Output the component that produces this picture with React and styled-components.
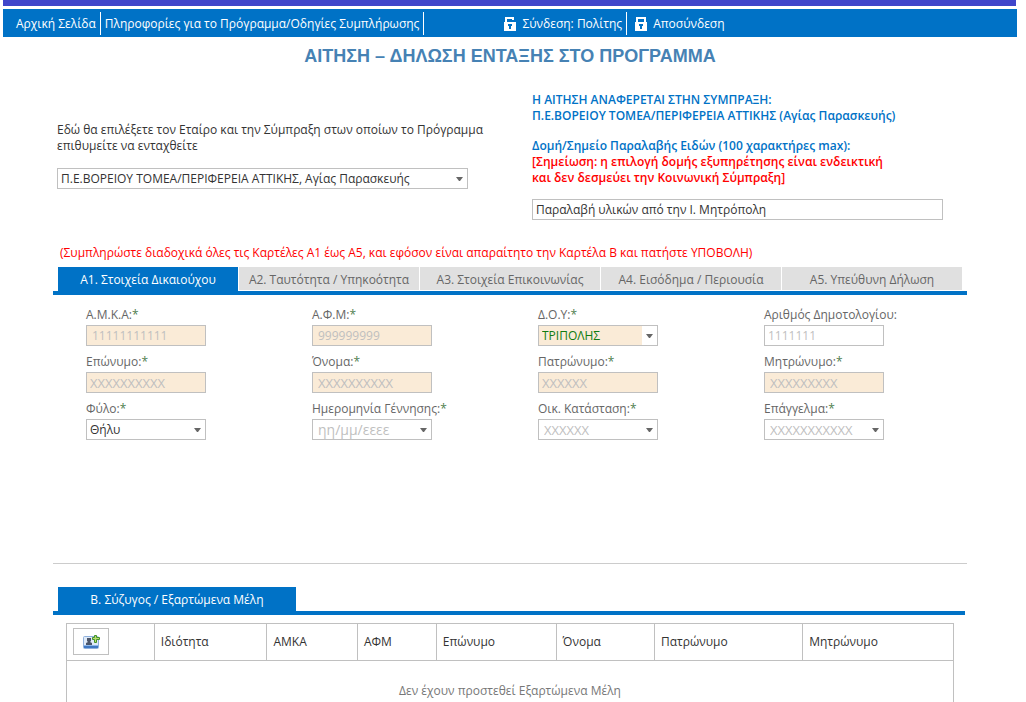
import React from "react";
import styled, { createGlobalStyle, css } from "styled-components";

const BLUE = "#0072c6";
const LINE = "#c0c0c0";

const GlobalStyle = createGlobalStyle`
  *, *::before, *::after { box-sizing: border-box; }
  body {
    margin: 0;
    background: #fff;
    color: #333;
    font: 12px/16px "Open Sans", "Noto Sans", sans-serif;
  }
`;

const Page = styled.div`
  margin: 0 9px 0 3px;
`;

const TopStripe = styled.div`
  height: 6px;
  margin: 0 1px 3px 0;
  background: #4046cb;
`;

const NavBar = styled.nav`
  display: flex;
  gap: 76px;
  height: 28px;
  padding: 3px 9px 2px;
  background: ${BLUE};
`;

const NavGroup = styled.div`
  display: flex;
`;

const NavLink = styled.a`
  display: flex;
  align-items: center;
  gap: 6px;
  padding: 0 ${(p) => (p.$last ? 8 : 4)}px;
  color: #fff;
  text-decoration: none;
  white-space: nowrap;
  border-right: 1px solid ${(p) => (p.$last ? "transparent" : "#fff")};
`;

const Title = styled.h1`
  margin: 7px 0 0;
  color: #4682b4;
  font: bold 18px/24px "Liberation Sans", Arial, sans-serif;
  text-align: center;
`;

const Content = styled.main`
  padding: 0 50px;
`;

const Intro = styled.section`
  display: grid;
  grid-template-columns: 1fr 1fr;
  gap: 64px;
  margin-top: 24px;
  padding: 0 24px 0 4px;
`;

const PartnerPicker = styled.div`
  min-width: 0;
  padding-top: 30px;
`;

const PickerLabel = styled.label`
  display: block;
  margin-bottom: 14px;
  white-space: nowrap;
`;

const Notice = styled.p`
  margin: 0 0 14px;
  color: ${BLUE};
  font-weight: 600;
`;

const PickupLabel = styled.label`
  display: block;
  margin-bottom: 13px;
  color: ${BLUE};
  font-weight: 600;
`;

const Warning = styled.span`
  color: #f00;
`;

const Hint = styled.p`
  margin: 25px 0 6px;
  padding-left: 7px;
  color: #f00;
`;

const controlStyle = css`
  width: 100%;
  height: 21px;
  margin: 0;
  padding: 0 ${(p) => p.$inset || 3}px;
  border: 1px solid ${LINE};
  border-radius: 0;
  outline: none;
  background: ${(p) => (p.$filled ? "#faebd7" : "#fff")};
  color: ${(p) => p.$color || "#333"};
  font: inherit;
  font-size: ${(p) => p.$size || 12}px;
`;

const TextInput = styled.input`
  ${controlStyle}
`;

const Select = styled.select`
  ${controlStyle}
  appearance: none;
`;

const DropBox = styled.div`
  display: grid;
  > * { grid-area: 1 / 1; }
`;

const DropMark = styled.span`
  display: flex;
  align-items: center;
  justify-content: center;
  justify-self: end;
  width: 15px;
  margin: 1px;
  background: #fff;
  pointer-events: none;
`;

const TabList = styled.div`
  display: flex;
  gap: 1px;
  padding: 0 5px;
  border-bottom: 4px solid ${BLUE};
`;

const Tab = styled.button`
  flex: 1;
  height: 23px;
  margin: 0 0 1px;
  padding: 2px 0 0;
  border: 0;
  background: #e0e0e0;
  color: #666;
  font: inherit;
  white-space: nowrap;

  &[aria-selected="true"] {
    height: 24px;
    margin: 0;
    background: ${BLUE};
    color: #fff;
    font-weight: 500;
  }
`;

const SpouseTab = styled(Tab)`
  flex: 0 0 238px;
`;

const FieldGrid = styled.form`
  display: grid;
  grid-template-columns: repeat(4, 1fr);
  gap: 8px 23px;
  padding: 12px 0 123px 33px;
  border-bottom: 1px solid #ccc;
`;

const Field = styled.div`
  width: 120px;
  color: #666;
`;

const FieldLabel = styled.label`
  display: block;
  margin-bottom: 2px;
  white-space: nowrap;
`;

const Star = styled.span`
  color: #508050;
`;

const Dependants = styled.section`
  margin: 23px 2px 0 0;
`;

const TableFrame = styled.div`
  margin: 8px 11px 0 13px;
`;

const Table = styled.table`
  width: 100%;
  border-collapse: collapse;
  table-layout: fixed;
`;

const HeadCell = styled.th`
  width: ${(p) => p.$share}%;
  height: 37px;
  padding: 0 6px;
  border: 1px solid ${LINE};
  font-weight: normal;
  text-align: left;
`;

const EmptyCell = styled.td`
  height: 41px;
  padding: 22px 0 2px;
  border: solid ${LINE};
  border-width: 0 1px;
  color: #777;
  text-align: center;
`;

const AddButton = styled.button`
  display: flex;
  align-items: center;
  justify-content: center;
  width: 36px;
  height: 27px;
  margin-bottom: 1px;
  padding: 0;
  border: 1px solid ${LINE};
  background: #fff;
`;

function LockIcon({ open }) {
  return (
    <svg width="12" height="14" viewBox="0 0 12 14" aria-hidden="true">
      <path fill="#fff" d={open ? "M1 0h9v3H8V2H3v3h9v9H0V5h1z" : "M1 0h10v5h1v9H0V5h1zM3 2v3h6V2z"} fillRule="evenodd" />
      <path fill={BLUE} d="M4 7h4v2H7v3H5V9H4z" />
    </svg>
  );
}

function Arrow() {
  return (
    <DropMark>
      <svg width="7" height="4" viewBox="0 0 7 4" aria-hidden="true">
        <path fill="#666" d="M0 0h7L4 4H3z" />
      </svg>
    </DropMark>
  );
}

function AddCardIcon() {
  return (
    <svg width="17" height="14" viewBox="0 0 17 14" aria-hidden="true">
      <rect x="0.5" y="1.5" width="15" height="12" rx="1" fill="#dfeaf8" stroke="#8fb0dc" />
      <path fill="#3f78c3" d="M1 11h14v2H1z" />
      <path fill="#8fb8ea" d="M1 10h14v1H1z" />
      <path fill="#4b566b" d="M4 3h4v3l-1 1 2 1v2H3V8l2-1-1-1z" />
      <path fill="#b9dd6c" stroke="#43912a" d="M11.5 0.5h2v2h3v2h-3v3h-2v-3h-2v-2h2z" />
    </svg>
  );
}

const TABS = [
  "A1. Στοιχεία Δικαιούχου",
  "A2. Ταυτότητα / Υπηκοότητα",
  "A3. Στοιχεία Επικοινωνίας",
  "A4. Εισόδημα / Περιουσία",
  "A5. Υπεύθυνη Δήλωση",
];

const GREY = "#bfbfbf";

const FIELDS = [
  { id: "amka", label: "Α.Μ.Κ.Α:", required: true, value: "11111111111", filled: true, inset: 5 },
  { id: "afm", label: "Α.Φ.Μ:", required: true, value: "999999999", filled: true, inset: 5 },
  { id: "doy", label: "Δ.Ο.Υ:", required: true, value: "ΤΡΙΠΟΛΗΣ", filled: true, color: "#107c10", kind: "select" },
  { id: "registry", label: "Αριθμός Δημοτολογίου:", value: "1111111" },
  { id: "surname", label: "Επώνυμο:", required: true, value: "XXXXXXXXXX", filled: true, size: 13 },
  { id: "name", label: "Όνομα:", required: true, value: "XXXXXXXXXX", filled: true, inset: 5, size: 13 },
  { id: "father", label: "Πατρώνυμο:", required: true, value: "XXXXXX", filled: true, size: 13 },
  { id: "mother", label: "Μητρώνυμο:", required: true, value: "XXXXXXXXX", filled: true, inset: 5, size: 13 },
  { id: "gender", label: "Φύλο:", required: true, value: "Θήλυ", kind: "select", color: "#333" },
  { id: "birth", label: "Ημερομηνία Γέννησης:", required: true, value: "ηη/μμ/εεεε", kind: "date", inset: 5, size: 14 },
  { id: "marital", label: "Οικ. Κατάσταση:", required: true, value: "XXXXXX", kind: "select", inset: 5, size: 13 },
  { id: "job", label: "Επάγγελμα:", required: true, value: "XXXXXXXXXXX", kind: "select", inset: 5, size: 13 },
];

const COLUMNS = [
  ["Ιδιότητα", 12.7],
  ["ΑΜΚΑ", 10.2],
  ["ΑΦΜ", 8.9],
  ["Επώνυμο", 13.5],
  ["Όνομα", 11.1],
  ["Πατρώνυμο", 16.7],
  ["Μητρώνυμο", 17],
];

function FormField({ id, label, required, value, filled, inset, size, kind, color = GREY }) {
  const look = { id, $filled: filled, $inset: inset, $size: size, $color: color };
  return (
    <Field>
      <FieldLabel htmlFor={id}>
        {label}
        {required && <Star>*</Star>}
      </FieldLabel>
      {kind === "select" && (
        <DropBox>
          <Select {...look}>
            <option>{value}</option>
          </Select>
          <Arrow />
        </DropBox>
      )}
      {kind === "date" && (
        <DropBox>
          <TextInput {...look} defaultValue={value} />
          <Arrow />
        </DropBox>
      )}
      {!kind && <TextInput {...look} defaultValue={value} />}
    </Field>
  );
}

export default function App() {
  return (
    <>
      <GlobalStyle />
      <Page>
        <TopStripe />
        <NavBar>
          <NavGroup>
            <NavLink href="#home">Αρχική Σελίδα</NavLink>
            <NavLink href="#info">Πληροφορίες για το Πρόγραμμα/Οδηγίες Συμπλήρωσης</NavLink>
          </NavGroup>
          <NavGroup>
            <NavLink href="#login">
              <LockIcon open />
              Σύνδεση: Πολίτης
            </NavLink>
            <NavLink href="#logout" $last>
              <LockIcon />
              Αποσύνδεση
            </NavLink>
          </NavGroup>
        </NavBar>
        <Title>ΑΙΤΗΣΗ – ΔΗΛΩΣΗ ΕΝΤΑΞΗΣ ΣΤΟ ΠΡΟΓΡΑΜΜΑ</Title>
        <Content>
          <Intro>
            <PartnerPicker>
              <PickerLabel htmlFor="partner">
                Εδώ θα επιλέξετε τον Εταίρο και την Σύμπραξη στων οποίων το Πρόγραμμα
                <br />
                επιθυμείτε να ενταχθείτε
              </PickerLabel>
              <DropBox>
                <Select id="partner">
                  <option>Π.Ε.ΒΟΡΕΙΟΥ ΤΟΜΕΑ/ΠΕΡΙΦΕΡΕΙΑ ΑΤΤΙΚΗΣ, Αγίας Παρασκευής</option>
                </Select>
                <Arrow />
              </DropBox>
            </PartnerPicker>
            <div>
              <Notice>
                Η ΑΙΤΗΣΗ ΑΝΑΦΕΡΕΤΑΙ ΣΤΗΝ ΣΥΜΠΡΑΞΗ:
                <br />
                Π.Ε.ΒΟΡΕΙΟΥ ΤΟΜΕΑ/ΠΕΡΙΦΕΡΕΙΑ ΑΤΤΙΚΗΣ (Αγίας Παρασκευής)
              </Notice>
              <PickupLabel htmlFor="pickup">
                Δομή/Σημείο Παραλαβής Ειδών (100 χαρακτήρες max):
                <br />
                <Warning>
                  [Σημείωση: η επιλογή δομής εξυπηρέτησης είναι ενδεικτική
                  <br />
                  και δεν δεσμεύει την Κοινωνική Σύμπραξη]
                </Warning>
              </PickupLabel>
              <TextInput id="pickup" defaultValue="Παραλαβή υλικών από την Ι. Μητρόπολη" />
            </div>
          </Intro>
          <Hint>
            (Συμπληρώστε διαδοχικά όλες τις Καρτέλες Α1 έως Α5, και εφόσον είναι απαραίτητο την Καρτέλα Β και πατήστε ΥΠΟΒΟΛΗ)
          </Hint>
          <TabList role="tablist">
            {TABS.map((name, i) => (
              <Tab key={name} type="button" role="tab" aria-selected={i === 0}>
                {name}
              </Tab>
            ))}
          </TabList>
          <FieldGrid>
            {FIELDS.map((field) => (
              <FormField key={field.id} {...field} />
            ))}
          </FieldGrid>
          <Dependants>
            <TabList role="tablist">
              <SpouseTab type="button" role="tab" aria-selected="true">
                Β. Σύζυγος / Εξαρτώμενα Μέλη
              </SpouseTab>
            </TabList>
            <TableFrame>
              <Table>
                <thead>
                  <tr>
                    <HeadCell $share={9.9}>
                      <AddButton type="button" aria-label="Προσθήκη μέλους">
                        <AddCardIcon />
                      </AddButton>
                    </HeadCell>
                    {COLUMNS.map(([name, share]) => (
                      <HeadCell key={name} $share={share}>
                        {name}
                      </HeadCell>
                    ))}
                  </tr>
                </thead>
                <tbody>
                  <tr>
                    <EmptyCell colSpan={8}>Δεν έχουν προστεθεί Εξαρτώμενα Μέλη</EmptyCell>
                  </tr>
                </tbody>
              </Table>
            </TableFrame>
          </Dependants>
        </Content>
      </Page>
    </>
  );
}
